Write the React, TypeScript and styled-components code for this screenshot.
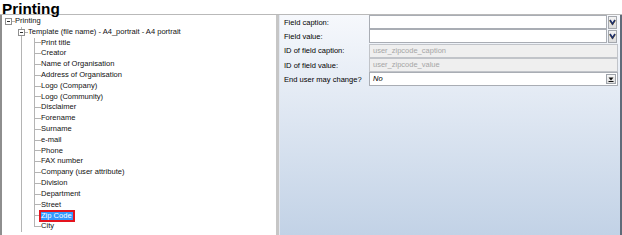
import React from "react";
import styled, { createGlobalStyle, css } from "styled-components";

const GlobalStyle = createGlobalStyle`
  html, body { margin: 0; padding: 0; background: #fff; overflow: hidden; }
  body { font-family: "Liberation Sans", Arial, sans-serif; }
`;

const LINE = "#b4b4b4";

const Frame = styled.div`
  width: 622px;
  height: 235px;
  display: flex;
  flex-direction: column;
  background: #fff;
  overflow: hidden;
`;

const TitleBar = styled.div`
  height: 14px;
  flex: none;
  border-bottom: 1px solid #b9b9b9;
  padding-left: 2px;
  position: relative;
  z-index: 1;
`;

const TitleText = styled.div`
  font-size: 15.3px;
  font-weight: bold;
  line-height: 17px;
  height: 14px;
  color: #000;
  white-space: nowrap;
`;

const Body = styled.div`
  flex: 1;
  display: flex;
  min-height: 0;
  border-left: 2px solid #8e8e8e;
  border-right: 2px solid #5f6b79;
`;

const TreePanel = styled.div`
  width: 274px;
  flex: none;
  background: #fff;
  padding-top: 1px;
  overflow: hidden;
`;

const Splitter = styled.div`
  width: 3px;
  flex: none;
  background: #c6c6c6;
`;

const PropPanel = styled.div`
  flex: 1;
  border-left: 1px solid #e3e8f0;
  padding: 0 2px 0 4px;
  background: linear-gradient(180deg, #f6f8fc 0%, #c2d2e6 100%);
`;

const TreeRow = styled.div`
  height: 10.8px;
  display: flex;
  align-items: center;
`;

type CellProps = { $vTop?: boolean; $vBottom?: boolean; $dash?: boolean };

const Cell = styled.div<CellProps>`
  width: 13px;
  height: 100%;
  flex: none;
  display: flex;
  align-items: center;
  justify-content: flex-start;
  padding-left: 3px;
  box-sizing: border-box;
  background-repeat: no-repeat;
  ${({ $vTop, $vBottom, $dash }) => {
    const imgs: string[] = [];
    const pos: string[] = [];
    const size: string[] = [];
    const g = `linear-gradient(${LINE}, ${LINE})`;
    if ($vTop && $vBottom) {
      imgs.push(g);
      pos.push("6px 0");
      size.push("1px 100%");
    } else if ($vTop) {
      imgs.push(g);
      pos.push("6px 0");
      size.push("1px 50%");
    }
    if ($dash) {
      imgs.push(g);
      pos.push("6px 50%");
      size.push("7px 1px");
    }
    if (!imgs.length) return "";
    return css`
      background-image: ${imgs.join(", ")};
      background-position: ${pos.join(", ")};
      background-size: ${size.join(", ")};
    `;
  }}
`;

const ExpandBox = styled.span`
  width: 7px;
  height: 7px;
  box-sizing: border-box;
  border: 1px solid #8f8f8f;
  background: linear-gradient(#303030, #303030) center / 3px 1px no-repeat, #fff;
`;

const NodeText = styled.span<{ $selected?: boolean }>`
  font-size: 7.55px;
  line-height: 10.8px;
  color: #111;
  white-space: nowrap;
  ${({ $selected }) =>
    $selected &&
    css`
      background: #3399ff;
      color: #fff;
      border: 2px solid #e4141e;
      line-height: 7.7px;
      margin-left: -2px;
      padding: 0 1.5px 0 0;
    `}
`;

const Form = styled.div`
  display: grid;
  grid-template-columns: 85px 1fr;
  grid-auto-rows: 14.33px;
  align-items: center;
`;

const Label = styled.div`
  font-size: 7.55px;
  color: #000;
  white-space: nowrap;
`;

const FieldWrap = styled.div`
  display: flex;
  align-items: center;
  height: 14px;
  gap: 1px;
`;

const Field = styled.div<{ $readonly?: boolean; $italic?: boolean }>`
  flex: 1;
  height: 14px;
  box-sizing: border-box;
  border: 1px solid ${({ $readonly }) => ($readonly ? "#c1c4c9" : "#a9adb4")};
  background: ${({ $readonly }) => ($readonly ? "#efefef" : "#fff")};
  color: ${({ $readonly }) => ($readonly ? "#a6a6a6" : "#000")};
  font-size: 7.5px;
  font-style: ${({ $italic }) => ($italic ? "italic" : "normal")};
  line-height: 12px;
  padding-left: 3px;
  display: flex;
  align-items: center;
  justify-content: space-between;
  white-space: nowrap;
`;

const PickButton = styled.div`
  width: 9px;
  height: 13px;
  box-sizing: border-box;
  border: 1px solid #a4a8ae;
  background: linear-gradient(#f4f4f4, #dcdcdc);
  display: flex;
  align-items: center;
  justify-content: center;
  margin-right: 1px;
`;

const ComboButton = styled.div`
  width: 10px;
  height: 10px;
  box-sizing: border-box;
  border: 1px solid #9ea3aa;
  background: linear-gradient(#f6f6f6, #dedede);
  display: flex;
  align-items: center;
  justify-content: center;
  margin-right: 1px;
`;

const PickIcon = () => (
  <svg width="7" height="7" viewBox="0 0 7 7">
    <path d="M0.5 1.5 L3.5 6 L6.5 1.5" fill="none" stroke="#c79a2c" strokeWidth="1" />
    <path d="M1 1 L3.5 5 L6 1" fill="none" stroke="#1d2f6b" strokeWidth="1.6" />
  </svg>
);

const ComboIcon = () => (
  <svg width="6" height="5" viewBox="0 0 6 5">
    <path d="M0.5 0.5 H5.5 L3 3.5 Z" fill="#111" />
    <rect x="0.5" y="4" width="5" height="1" fill="#111" />
  </svg>
);

const children = [
  "Print title",
  "Creator",
  "Name of Organisation",
  "Address of Organisation",
  "Logo (Company)",
  "Logo (Community)",
  "Disclaimer",
  "Forename",
  "Surname",
  "e-mail",
  "Phone",
  "FAX number",
  "Company (user attribute)",
  "Division",
  "Department",
  "Street",
  "Zip Code",
  "City",
];

export default function App() {
  return (
    <>
      <GlobalStyle />
      <Frame>
        <TitleBar>
          <TitleText>Printing</TitleText>
        </TitleBar>
        <Body>
          <TreePanel>
            <TreeRow>
              <Cell $dash>
                <ExpandBox />
              </Cell>
              <NodeText>Printing</NodeText>
            </TreeRow>
            <TreeRow>
              <Cell />
              <Cell $vTop $vBottom $dash>
                <ExpandBox />
              </Cell>
              <NodeText>Template (file name) - A4_portrait - A4 portrait</NodeText>
            </TreeRow>
            {children.map((c, i) => (
              <TreeRow key={c}>
                <Cell />
                <Cell $vTop $vBottom />
                <Cell $vTop $vBottom={i < children.length - 1} $dash />
                <NodeText $selected={c === "Zip Code"}>{c}</NodeText>
              </TreeRow>
            ))}
          </TreePanel>
          <Splitter />
          <PropPanel>
            <Form>
              <Label>Field caption:</Label>
              <FieldWrap>
                <Field />
                <PickButton>
                  <PickIcon />
                </PickButton>
              </FieldWrap>
              <Label>Field value:</Label>
              <FieldWrap>
                <Field />
                <PickButton>
                  <PickIcon />
                </PickButton>
              </FieldWrap>
              <Label>ID of field caption:</Label>
              <FieldWrap>
                <Field $readonly>user_zipcode_caption</Field>
              </FieldWrap>
              <Label>ID of field value:</Label>
              <FieldWrap>
                <Field $readonly>user_zipcode_value</Field>
              </FieldWrap>
              <Label>End user may change?</Label>
              <FieldWrap>
                <Field $italic>
                  No
                  <ComboButton>
                    <ComboIcon />
                  </ComboButton>
                </Field>
              </FieldWrap>
            </Form>
          </PropPanel>
        </Body>
      </Frame>
    </>
  );
}
